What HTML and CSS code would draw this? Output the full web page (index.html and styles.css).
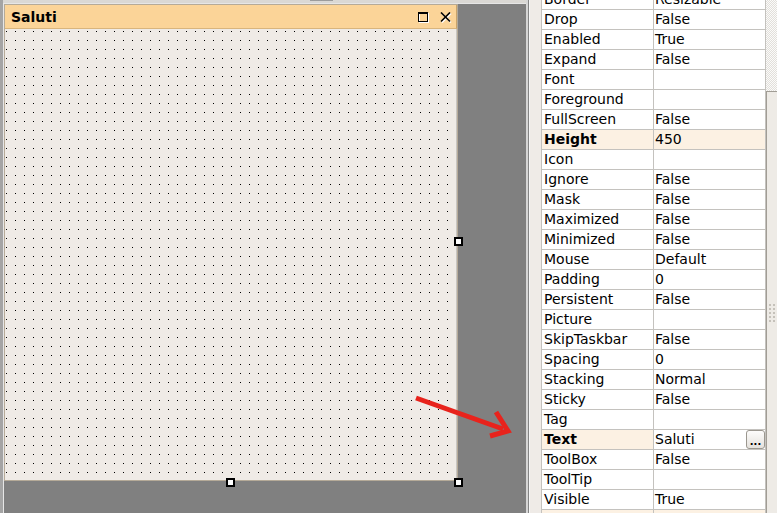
FILE: index.html
```html
<!DOCTYPE html>
<html lang="en">
<head>
    <meta charset="UTF-8">
    <title>Form designer - Saluti</title>
    <link rel="stylesheet" href="styles.css">
</head>
<body>
    <div class="app">
        <div class="designer">
            <div class="designer-top"><span class="tab"></span></div>
            <div class="canvas">
                <div class="form">
                    <div class="form-title">
                        <span class="form-caption">Saluti</span>
                        <span class="title-buttons">
                            <svg width="11" height="11" viewBox="0 0 11 11">
                                <rect x="1.5" y="1.5" width="9" height="9" fill="none" stroke="#fff"/>
                                <rect x="0.5" y="0.5" width="9" height="9" fill="none" stroke="#000"/>
                                <line x1="0" y1="1.5" x2="10" y2="1.5" stroke="#000"/>
                            </svg>
                            <svg width="12" height="11" viewBox="0 0 12 11">
                                <path d="M2 1.5 L11 10.5 M11 1.5 L2 10.5" stroke="#fff" stroke-width="1.6"/>
                                <path d="M1 0.5 L10 9.5 M10 0.5 L1 9.5" stroke="#000" stroke-width="1.6"/>
                            </svg>
                        </span>
                    </div>
                    <div class="form-body"></div>
                    <span class="handle handle-right"></span>
                    <span class="handle handle-bottom"></span>
                    <span class="handle handle-corner"></span>
                </div>
            </div>
        </div>

        <div class="splitter"></div>

        <div class="props">
            <div class="prop-grid">
                <div class="row"><span class="name">Border</span><span class="value">Resizable</span></div>
                <div class="row"><span class="name">Drop</span><span class="value">False</span></div>
                <div class="row"><span class="name">Enabled</span><span class="value">True</span></div>
                <div class="row"><span class="name">Expand</span><span class="value">False</span></div>
                <div class="row"><span class="name">Font</span><span class="value"></span></div>
                <div class="row"><span class="name">Foreground</span><span class="value"></span></div>
                <div class="row"><span class="name">FullScreen</span><span class="value">False</span></div>
                <div class="row changed"><span class="name">Height</span><span class="value">450</span></div>
                <div class="row"><span class="name">Icon</span><span class="value"></span></div>
                <div class="row"><span class="name">Ignore</span><span class="value">False</span></div>
                <div class="row"><span class="name">Mask</span><span class="value">False</span></div>
                <div class="row"><span class="name">Maximized</span><span class="value">False</span></div>
                <div class="row"><span class="name">Minimized</span><span class="value">False</span></div>
                <div class="row"><span class="name">Mouse</span><span class="value">Default</span></div>
                <div class="row"><span class="name">Padding</span><span class="value">0</span></div>
                <div class="row"><span class="name">Persistent</span><span class="value">False</span></div>
                <div class="row"><span class="name">Picture</span><span class="value"></span></div>
                <div class="row"><span class="name">SkipTaskbar</span><span class="value">False</span></div>
                <div class="row"><span class="name">Spacing</span><span class="value">0</span></div>
                <div class="row"><span class="name">Stacking</span><span class="value">Normal</span></div>
                <div class="row"><span class="name">Sticky</span><span class="value">False</span></div>
                <div class="row"><span class="name">Tag</span><span class="value"></span></div>
                <div class="row changed editing"><span class="name">Text</span><span class="value">Saluti<button class="dots-btn">...</button></span></div>
                <div class="row"><span class="name">ToolBox</span><span class="value">False</span></div>
                <div class="row"><span class="name">ToolTip</span><span class="value"></span></div>
                <div class="row"><span class="name">Visible</span><span class="value">True</span></div>
                <div class="row changed"><span class="name"></span><span class="value"></span></div>
            </div>
            <div class="scrollbar">
                <div class="track"></div>
                <div class="thumb"><span class="grip"></span></div>
            </div>
        </div>

        <!-- annotation arrow drawn over the screenshot -->
        <svg class="arrow" width="777" height="513" viewBox="0 0 777 513">
            <path d="M416 398 L503 429" stroke="#e8231c" stroke-width="5" fill="none"/>
            <path d="M496 412 L508 431 L490 436" stroke="#e8231c" stroke-width="5" fill="none" stroke-linejoin="miter"/>
        </svg>
    </div>
</body>
</html>
```

FILE: styles.css
```css
* {
    margin: 0;
    padding: 0;
    box-sizing: border-box;
}

body {
    font-family: 'DejaVu Sans', Verdana, sans-serif;
    font-size: 14px;
    color: #000;
    background: #efebe7;
    overflow: hidden;
}

.app {
    position: relative;
    display: flex;
    width: 777px;
    height: 513px;
}

/* designer area */

.designer {
    width: 526px;
    flex: none;
    display: flex;
    flex-direction: column;
    background: #808080;
    border-left: 3px solid #a4a4a4;
}

.designer-top {
    height: 3px;
    background: #dad8d4;
    display: flex;
}

.designer-top .tab {
    width: 23px;
    height: 1px;
    margin-left: 307px;
    background: #9c9c9c;
}

.canvas {
    flex: 1;
    border-top: 1px solid #e6e6e6;
    border-left: 1px solid #e6e6e6;
}

.form {
    position: relative;
    width: 454px;
    height: 477px;
    display: flex;
    flex-direction: column;
    border: 1px solid #b5aa98;
    background: #efebe6;
}

.form-title {
    height: 24px;
    flex: none;
    display: flex;
    align-items: center;
    padding: 0 4px 0 6px;
    background: #fbd498;
    border-bottom: 1px solid #d9b57d;
    border-right: 1px solid #c9a46b;
}

.form-caption {
    font-weight: bold;
    font-size: 14px;
}

.title-buttons {
    margin-left: auto;
    display: flex;
    align-items: center;
    gap: 11px;
    padding-top: 1px;
}

.form-body {
    flex: 1;
    background-color: #000;
    background-image:
        linear-gradient(to right, transparent 1px, #efebe6 1px),
        linear-gradient(to bottom, transparent 1px, #efebe6 1px);
    background-size: 9px 9px;
    background-position: 1px 2px;
    border-right: 1px solid #c8c6c2;
}

.handle {
    position: absolute;
    width: 9px;
    height: 9px;
    background: #fff;
    border: 2px solid #000;
}

.handle-right {
    left: 449px;
    top: 232px;
}

.handle-bottom {
    left: 221px;
    top: 473px;
}

.handle-corner {
    left: 449px;
    top: 473px;
}

.splitter {
    width: 4px;
    flex: none;
    border-left: 2px solid #d6d6d6;
    background: #858585;
    border-right: 1px solid #f6f6f6;
}

/* property grid */

.props {
    flex: 1;
    display: flex;
    padding-left: 11px;
    overflow: hidden;
}

.prop-grid {
    width: 225px;
    flex: none;
    margin-top: -10px;
    border-left: 1px solid #c4c2be;
    background: #fff;
}

.row {
    display: flex;
    height: 20px;
    border-bottom: 1px solid #c4c2be;
    line-height: 19px;
    white-space: nowrap;
}

.name {
    width: 112px;
    flex: none;
    padding-left: 2px;
    border-right: 1px solid #c4c2be;
    overflow: hidden;
}

.value {
    width: 112px;
    flex: none;
    display: flex;
    align-items: center;
    justify-content: space-between;
    padding-left: 1px;
    border-right: 1px solid #c4c2be;
    overflow: hidden;
}

.row.changed .name,
.row.changed .value {
    background: #fcf1e3;
}

.row.changed .name {
    font-weight: bold;
}

.row.editing .value {
    background: #fff;
}

.dots-btn {
    width: 19px;
    height: 19px;
    margin-right: 0;
    border: 1px solid #9b978f;
    border-radius: 3px;
    background: linear-gradient(#fdfcfb, #e4e1dc);
    font-family: 'DejaVu Sans', sans-serif;
    font-size: 10px;
    font-weight: bold;
    line-height: 22px;
    color: #000;
}

.scrollbar {
    width: 11px;
    flex: none;
    display: flex;
    flex-direction: column;
}

.track {
    height: 91px;
    flex: none;
    background: repeating-conic-gradient(#e2dfda 0 25%, #fbfbfa 0 50%) 0 0 / 2px 2px;
}

.thumb {
    flex: 1;
    display: flex;
    justify-content: center;
    padding-top: 212px;
    background: #eeebe6;
    border-top: 1px solid #a19d95;
    border-left: 1px solid #a19d95;
}

.grip {
    width: 6px;
    height: 18px;
    background-image: linear-gradient(to right, #c5c1ba 2px, transparent 2px),
        linear-gradient(to bottom, #c5c1ba 2px, transparent 2px);
    background-color: transparent;
    background-size: 4px 4px;
    -webkit-mask: linear-gradient(to right, #000 2px, transparent 2px) 0 0 / 4px 4px,
        linear-gradient(to bottom, #000 2px, transparent 2px) 0 0 / 4px 4px;
    -webkit-mask-composite: source-in;
}

.arrow {
    position: absolute;
    left: 0;
    top: 0;
    pointer-events: none;
}
```
